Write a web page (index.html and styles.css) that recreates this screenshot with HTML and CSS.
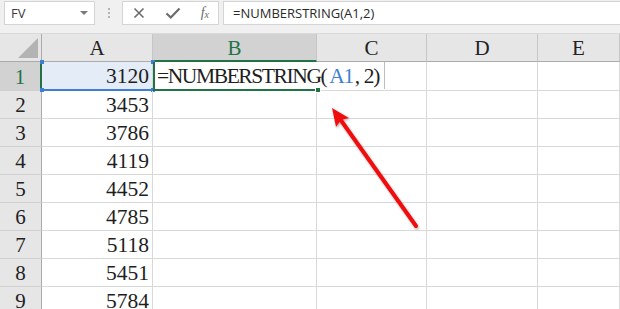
FILE: index.html
```html
<!DOCTYPE html>
<html lang="en">
<head>
    <meta charset="UTF-8">
    <title>NUMBERSTRING</title>
    <link rel="stylesheet" href="styles.css">
</head>
<body>
    <div class="toolbar">
        <div class="namebox">
            <span>FV</span>
            <svg class="caret" width="8" height="5" viewBox="0 0 8 5"><path d="M0 0 L8 0 L4 4 Z" fill="#7a7a7a"/></svg>
        </div>
        <div class="grip"><i></i><i></i><i></i></div>
        <div class="fxbox">
            <svg class="tool-icon" width="14" height="14" viewBox="0 0 14 14"><path d="M2.5 2.5 L11.5 11.5 M11.5 2.5 L2.5 11.5" stroke="#6b6b6b" stroke-width="1.6" fill="none"/></svg>
            <svg class="tool-icon" width="16" height="14" viewBox="0 0 16 14"><path d="M1.5 7.5 L5.8 11.5 L14.5 2.5" stroke="#6b6b6b" stroke-width="2.2" fill="none"/></svg>
            <span class="fx">f<sub>x</sub></span>
        </div>
        <div class="formula">=NUMBERSTRING(A1,2)</div>
    </div>

    <div class="sheet">
        <div class="corner"><span class="tri"></span></div>
        <div class="colhead">A</div>
        <div class="colhead active">B</div>
        <div class="colhead">C</div>
        <div class="colhead">D</div>
        <div class="colhead">E</div>

        <div class="rowhead active">1</div>
        <div class="cell num ref">3120<i class="dot tl"></i><i class="dot tr"></i><i class="dot bl"></i><i class="dot br"></i></div>
        <div class="cell edit"><span class="editor">=NUMBERSTRING(<span class="refname">A1</span><span class="comma">,</span>2)</span><i class="handle"></i></div>
        <div class="cell"></div>
        <div class="cell"></div>
        <div class="cell"></div>

        <div class="rowhead">2</div>
        <div class="cell num">3453</div><div class="cell"></div><div class="cell"></div><div class="cell"></div><div class="cell"></div>
        <div class="rowhead">3</div>
        <div class="cell num">3786</div><div class="cell"></div><div class="cell"></div><div class="cell"></div><div class="cell"></div>
        <div class="rowhead">4</div>
        <div class="cell num">4119</div><div class="cell"></div><div class="cell"></div><div class="cell"></div><div class="cell"></div>
        <div class="rowhead">5</div>
        <div class="cell num">4452</div><div class="cell"></div><div class="cell"></div><div class="cell"></div><div class="cell"></div>
        <div class="rowhead">6</div>
        <div class="cell num">4785</div><div class="cell"></div><div class="cell"></div><div class="cell"></div><div class="cell"></div>
        <div class="rowhead">7</div>
        <div class="cell num">5118</div><div class="cell"></div><div class="cell"></div><div class="cell"></div><div class="cell"></div>
        <div class="rowhead">8</div>
        <div class="cell num">5451</div><div class="cell"></div><div class="cell"></div><div class="cell"></div><div class="cell"></div>
        <div class="rowhead">9</div>
        <div class="cell num">5784</div><div class="cell"></div><div class="cell"></div><div class="cell"></div><div class="cell"></div>
    </div>

    <!-- annotation arrow drawn over the sheet -->
    <svg class="arrow" width="620" height="309" viewBox="0 0 620 309">
        <defs>
            <filter id="soft" x="-20%" y="-20%" width="140%" height="140%">
                <feDropShadow dx="1" dy="1.5" stdDeviation="1.2" flood-color="#000" flood-opacity="0.3"/>
            </filter>
        </defs>
        <g filter="url(#soft)">
            <line x1="416" y1="226" x2="340" y2="119" stroke="#f01010" stroke-width="4" stroke-linecap="round"/>
            <path d="M332 108 L349 118 L341 120 L336 127 Z" fill="#f01010"/>
        </g>
    </svg>
</body>
</html>
```

FILE: styles.css
```css
* {
    box-sizing: border-box;
}

body {
    margin: 0;
    width: 620px;
    height: 309px;
    overflow: hidden;
    background: #ffffff;
    font-family: 'Liberation Serif', serif;
    position: relative;
}

/* formula bar */
.toolbar {
    display: flex;
    align-items: flex-start;
    height: 34px;
    padding: 1px 0 0 4px;
    background: #f0f0f0;
    border-bottom: 1px solid #dadada;
}

.namebox {
    width: 91px;
    height: 24px;
    display: flex;
    align-items: center;
    justify-content: space-between;
    padding: 0 6px 0 6px;
    background: #ffffff;
    border: 1px solid #d4d4d4;
    font-family: 'Open Sans', sans-serif;
    font-size: 13px;
    color: #3a3a3a;
}

.grip {
    width: 27px;
    height: 24px;
    display: flex;
    flex-direction: column;
    align-items: center;
    justify-content: center;
    gap: 2px;
}

.grip i {
    width: 2px;
    height: 2px;
    background: #b4b4b4;
}

.fxbox {
    width: 97px;
    height: 24px;
    display: flex;
    align-items: center;
    justify-content: space-between;
    padding: 0 9px 0 9px;
    background: #ffffff;
    border: 1px solid #d4d4d4;
}

.fx {
    font-family: 'Liberation Serif', serif;
    font-style: italic;
    font-size: 14px;
    color: #6b6b6b;
    line-height: 1;
}

.fx sub {
    font-size: 10px;
    vertical-align: -1px;
}

.formula {
    flex: 1;
    height: 24px;
    margin-left: 4px;
    padding-left: 9px;
    background: #ffffff;
    border: 1px solid #d4d4d4;
    border-right: none;
    font-family: 'Open Sans', sans-serif;
    font-size: 13px;
    line-height: 22px;
    color: #2a2a2a;
}

/* worksheet grid */
.sheet {
    display: grid;
    grid-template-columns: 42px 111px 164px 110px 111px 1fr;
    grid-template-rows: 28px 29px repeat(8, 28px);
}

.corner,
.colhead,
.rowhead {
    background: #e6e6e6;
    color: #222222;
    font-size: 21px;
    display: flex;
    align-items: center;
    justify-content: center;
}

.corner {
    position: relative;
    border-right: 1px solid #ababab;
    border-bottom: 1px solid #ababab;
}

.corner .tri {
    position: absolute;
    right: 3px;
    bottom: 3px;
    width: 0;
    height: 0;
    border-left: 20px solid transparent;
    border-bottom: 20px solid #b3b3b3;
}

.colhead {
    border-right: 1px solid #c6c6c6;
    border-bottom: 1px solid #ababab;
    padding-top: 2px;
}

.colhead.active {
    background: #d2d2d2;
    color: #217346;
    border-bottom: 2px solid #217346;
}

.rowhead {
    border-right: 1px solid #ababab;
    border-bottom: 1px solid #d0d0d0;
    padding-top: 2px;
}

.rowhead.active {
    background: #d2d2d2;
    color: #217346;
    border-right: 2px solid #217346;
}

.cell {
    position: relative;
    border-right: 1px solid #d9d9d9;
    border-bottom: 1px solid #d9d9d9;
    font-size: 21.5px;
    color: #1e1e1e;
    display: flex;
    align-items: center;
    padding-top: 2px;
    white-space: nowrap;
}

.cell.num {
    justify-content: flex-end;
    padding-right: 3px;
}

.cell.ref {
    background: #e4ecf7;
    border-bottom: 2px solid #3e7fd6;
}

.dot {
    position: absolute;
    width: 4px;
    height: 4px;
    background: #3e7fd6;
}

.dot.tl { left: -2px; top: -2px; }
.dot.tr { right: -3px; top: -2px; }
.dot.bl { left: -2px; bottom: -3px; }
.dot.br { right: -3px; bottom: -3px; }

.cell.edit {
    z-index: 2;
    border-left: 2px solid #217346;
    border-bottom: 2px solid #217346;
    border-right: none;
    overflow: visible;
    padding-top: 0;
    align-items: stretch;
}

.editor {
    display: flex;
    align-items: center;
    height: 100%;
    padding: 2px 5px 0 2px;
    margin-bottom: -2px;
    background: #ffffff;
    border-right: 1px solid #bdbdbd;
    letter-spacing: -1.4px;
    color: #1e1e1e;
}

.refname {
    color: #3e7fd6;
    padding: 0 2px 0 3px;
}

.comma {
    padding-right: 5px;
}

.handle {
    position: absolute;
    left: 160px;
    bottom: -4px;
    width: 6px;
    height: 6px;
    background: #217346;
    border: 1px solid #ffffff;
}

.arrow {
    position: absolute;
    left: 0;
    top: 0;
    pointer-events: none;
}
```
